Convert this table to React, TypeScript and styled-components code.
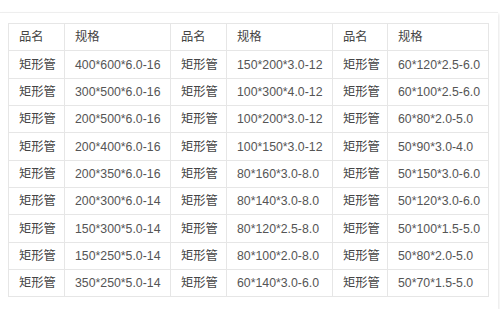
import React from "react";
import styled, { createGlobalStyle } from "styled-components";

const Global = createGlobalStyle`
  html, body { margin: 0; padding: 0; background: #ffffff; }
  body { font-family: "Liberation Sans", Arial, "Noto Sans CJK SC", sans-serif; }
`;

const Card = styled.div`
  box-sizing: border-box;
  width: 498px;
  height: 297px;
  margin-top: 12px;
  padding: 10px 10px 0 8px;
  border-top: 1px solid #eeeeee;
  box-shadow: 1px 2px 3px rgba(0, 0, 0, 0.1);
  background: #fff;
`;

const Table = styled.table`
  border-collapse: collapse;
  table-layout: fixed;
  width: 480px;
`;

const Row = styled.tr`
  height: 27.35px;
`;

const Cell = styled.td<{ $name?: boolean }>`
  border: 1px solid #e6e6e6;
  padding: 0 0 0 10px;
  font-size: 12.3px;
  line-height: 14px;
  color: ${(p) => (p.$name ? "#444444" : "#555555")};
  font-family: "Liberation Sans", Arial, "Noto Sans CJK SC", sans-serif;
  white-space: nowrap;
  vertical-align: middle;
`;

const widths = [56, 106, 56, 106, 55, 101];

const data: [string, string, string][] = [
  ["400*600*6.0-16", "150*200*3.0-12", "60*120*2.5-6.0"],
  ["300*500*6.0-16", "100*300*4.0-12", "60*100*2.5-6.0"],
  ["200*500*6.0-16", "100*200*3.0-12", "60*80*2.0-5.0"],
  ["200*400*6.0-16", "100*150*3.0-12", "50*90*3.0-4.0"],
  ["200*350*6.0-16", "80*160*3.0-8.0", "50*150*3.0-6.0"],
  ["200*300*6.0-14", "80*140*3.0-8.0", "50*120*3.0-6.0"],
  ["150*300*5.0-14", "80*120*2.5-8.0", "50*100*1.5-5.0"],
  ["150*250*5.0-14", "80*100*2.0-8.0", "50*80*2.0-5.0"],
  ["350*250*5.0-14", "60*140*3.0-6.0", "50*70*1.5-5.0"],
];

export default function App() {
  return (
    <>
      <Global />
      <Card>
        <Table>
          <colgroup>
            {widths.map((w, i) => (
              <col key={i} style={{ width: w }} />
            ))}
          </colgroup>
          <tbody>
            <Row>
              {[0, 1, 2].map((i) => (
                <React.Fragment key={i}>
                  <Cell $name>品名</Cell>
                  <Cell $name>规格</Cell>
                </React.Fragment>
              ))}
            </Row>
            {data.map((r, ri) => (
              <Row key={ri}>
                {r.map((spec, ci) => (
                  <React.Fragment key={ci}>
                    <Cell $name>矩形管</Cell>
                    <Cell>{spec}</Cell>
                  </React.Fragment>
                ))}
              </Row>
            ))}
          </tbody>
        </Table>
      </Card>
    </>
  );
}
